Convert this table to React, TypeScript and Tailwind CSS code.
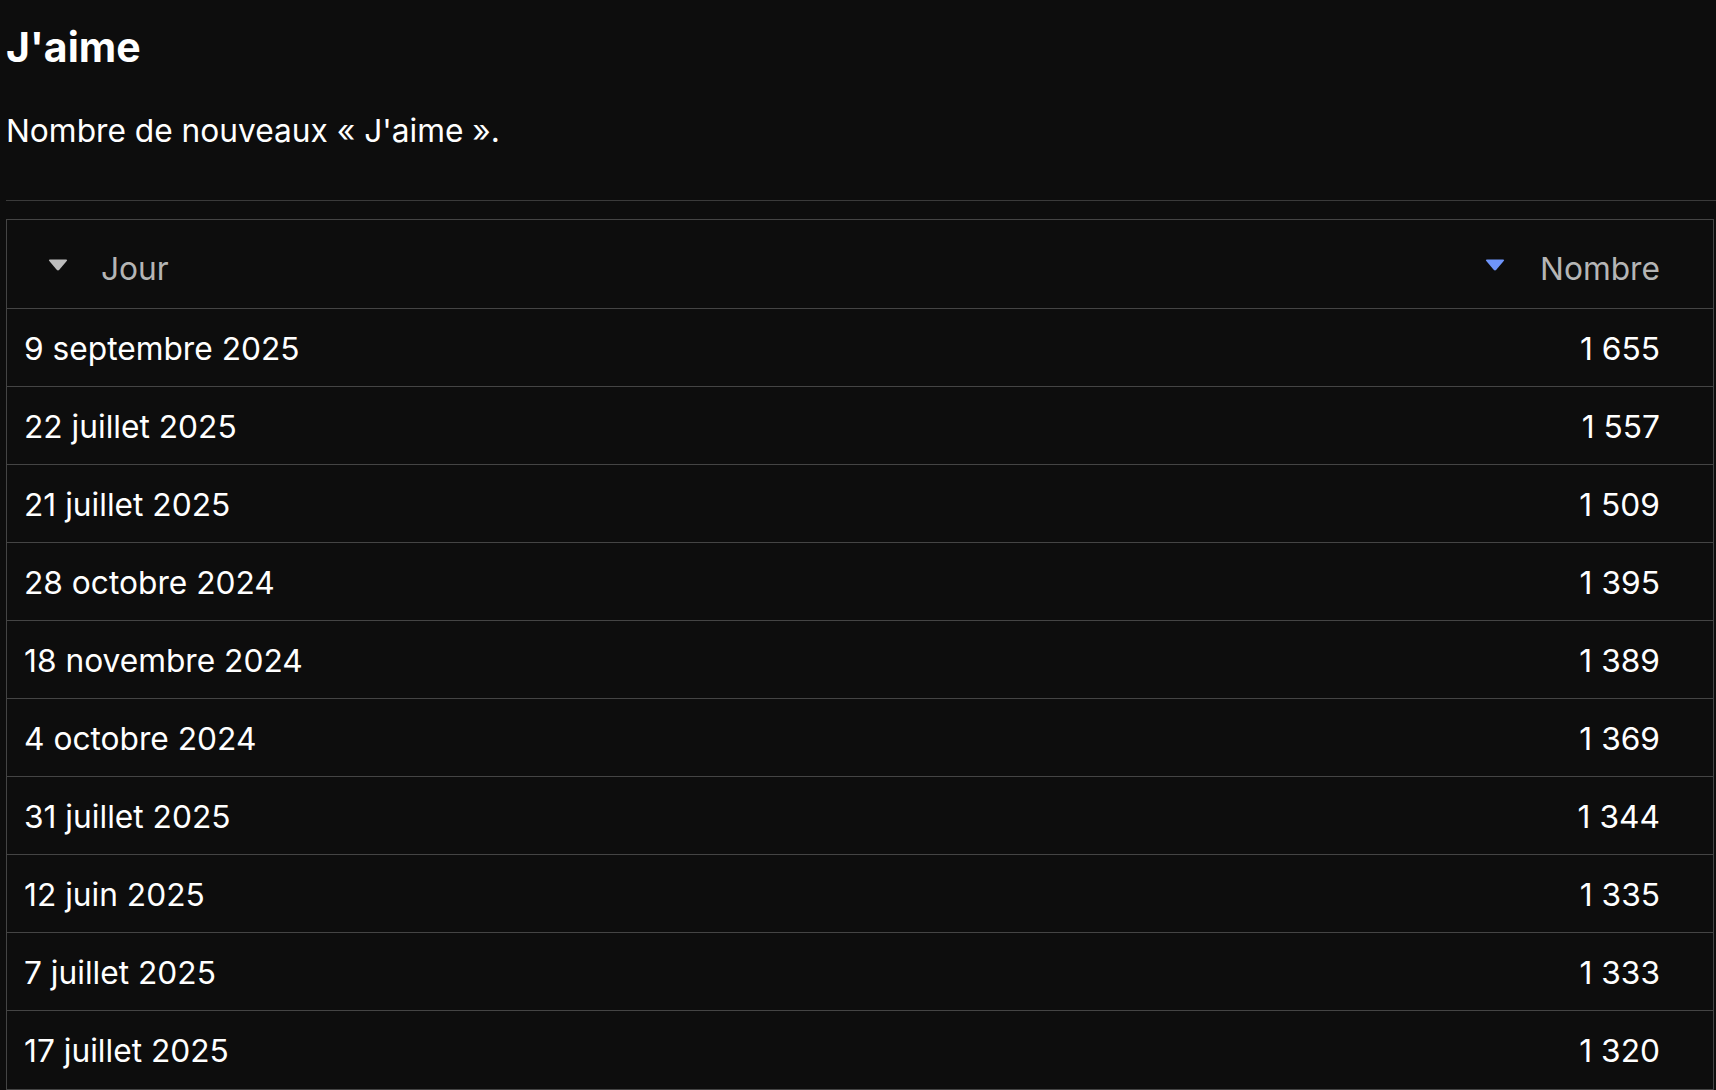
import React from "react";

const rows = [
  { day: "9 septembre 2025", count: 1655 },
  { day: "22 juillet 2025", count: 1557 },
  { day: "21 juillet 2025", count: 1509 },
  { day: "28 octobre 2024", count: 1395 },
  { day: "18 novembre 2024", count: 1389 },
  { day: "4 octobre 2024", count: 1369 },
  { day: "31 juillet 2025", count: 1344 },
  { day: "12 juin 2025", count: 1335 },
  { day: "7 juillet 2025", count: 1333 },
  { day: "17 juillet 2025", count: 1320 },
];

// thousands split the French way: "1 655"
const Count = ({ n }: { n: number }) => {
  const s = String(n);
  return (
    <span>
      {s.slice(0, s.length - 3)}
      <span className="ml-[9px]">{s.slice(-3)}</span>
    </span>
  );
};

const Caret = ({ className }: { className: string }) => (
  <svg width="20" height="12" viewBox="0 0 20 12" className={className}>
    <path
      d="M2 0.5 H18 Q19.8 0.5 18.7 2 L11.3 10.8 Q10 12.2 8.7 10.8 L1.3 2 Q0.2 0.5 2 0.5 Z"
      fill="currentColor"
    />
  </svg>
);

export default function App() {
  return (
    <div className="min-h-screen bg-[#0d0d0d] pl-[6px] text-white font-['Inter',sans-serif] overflow-hidden">
      <h1 className="pt-[22px] text-[41px] leading-[50px] font-bold">J'aime</h1>
      <p className="mt-[39px] text-[31.7px] leading-[40px]">Nombre de nouveaux « J'aime ».</p>
      <div className="mt-[49px] border-t border-[#3a3a3a]" />
      <div className="mt-[18px] mr-[2px] border border-[#444444]">
        <div className="flex h-[89px] items-center border-b border-[#444444] pt-[9px] text-[31.7px] text-[#b5b5b5]">
          <div className="flex flex-1 items-center pl-[41px]">
            <Caret className="text-[#bdbdbd] -mt-[7px]" />
            <span className="ml-[33px]">Jour</span>
          </div>
          <div className="flex items-center pr-[53px]">
            <Caret className="text-[#6f95fb] -mt-[7px]" />
            <span className="ml-[35px]">Nombre</span>
          </div>
        </div>
        {rows.map((r, i) => (
          <div
            key={i}
            className="flex h-[78px] items-center justify-between border-b border-[#444444] pl-[17px] pr-[53px] pt-[2px] text-[31.7px] last:border-b-0"
          >
            <span>{r.day}</span>
            <Count n={r.count} />
          </div>
        ))}
      </div>
    </div>
  );
}
